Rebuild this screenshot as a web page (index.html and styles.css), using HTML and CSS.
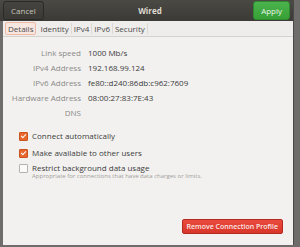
FILE: index.html
```
<!DOCTYPE html>
<html lang="en">
<head>
    <meta charset="UTF-8">
    <title>Wired</title>
    <link rel="stylesheet" href="styles.css">
</head>
<body>

<div class="desktop">
    <div class="dialog">
        <div class="headerbar">
            <button class="btn-cancel">Cancel</button>
            <div class="title">Wired</div>
            <button class="btn-apply">Apply</button>
        </div>

        <div class="tabs">
            <span class="tab active">Details</span>
            <span class="tab">Identity</span>
            <span class="tab">IPv4</span>
            <span class="tab">IPv6</span>
            <span class="tab">Security</span>
        </div>

        <div class="content">
            <div class="info">
                <span class="label">Link speed</span><span class="value">1000 Mb/s</span>
                <span class="label">IPv4 Address</span><span class="value">192.168.99.124</span>
                <span class="label">IPv6 Address</span><span class="value">fe80::d240:86db:c962:7609</span>
                <span class="label">Hardware Address</span><span class="value">08:00:27:83:7E:43</span>
                <span class="label">DNS</span><span class="value"></span>
            </div>

            <div class="checks">
                <div class="check">
                    <span class="box checked"></span>
                    <span>Connect automatically</span>
                </div>
                <div class="check">
                    <span class="box checked"></span>
                    <span>Make available to other users</span>
                </div>
                <div class="check">
                    <span class="box"></span>
                    <div>
                        <div>Restrict background data usage</div>
                        <div class="hint">Appropriate for connections that have data charges or limits.</div>
                    </div>
                </div>
            </div>

            <div class="footer">
                <button class="btn-remove">Remove Connection Profile</button>
            </div>
        </div>
    </div>
    <div class="side"></div>
</div>

</body>
</html>
```

FILE: styles.css
```
body {
    margin: 0;
    font-family: "Open Sans", "DejaVu Sans", sans-serif;
    font-size: 8px;
    background-color: #6e6d6b;
}
.desktop {
    display: flex;
    width: 300px;
    height: 247px;
    overflow: hidden;
}
.dialog {
    width: 290px;
    height: 245px;
    margin-left: 3px;
    display: flex;
    flex-direction: column;
    background-color: #f2f1f0;
    border-right: 1px solid #4a4945;
}
.side {
    flex: 1;
    background-color: #6e6d6b;
}
.headerbar {
    height: 21px;
    margin-left: -3px;
    display: flex;
    align-items: center;
    justify-content: space-between;
    padding: 0 3px 0 3px;
    background: linear-gradient(#4a4944, #3b3a36);
    color: #dfdbd2;
}
.headerbar button {
    font-family: inherit;
    font-size: 8px;
    height: 19px;
    border-radius: 3px;
    padding: 0 7px;
}
.btn-cancel {
    background: linear-gradient(#45443f, #3a3935);
    border: 1px solid #2b2a27;
    color: #c8c4bc;
}
.btn-apply {
    background: linear-gradient(#4cb34c, #36a036);
    border: 1px solid #2f8a2f;
    color: #e8f5e8;
    padding: 0 5px;
    margin-left: 3px;
}
.title {
    font-weight: bold;
    color: #dfdbd2;
    margin-left: 6px;
}
.tabs {
    display: flex;
    align-items: center;
    height: 15px;
    padding: 0 2px;
    border-bottom: 1px solid #d5d2cd;
    background-color: #efedeb;
    color: #4c4c4c;
}
.tab {
    padding: 0 2px;
    line-height: 11px;
    border-right: 1px solid #dcd9d4;
}
.tab.active {
    border: 1px solid #f0b9a5;
    border-radius: 2px;
    background-color: #f7e6df;
    margin-right: 2px;
}
.content {
    flex: 1;
    display: flex;
    flex-direction: column;
    padding: 10px 0 0 0;
}
.info {
    display: grid;
    grid-template-columns: 78px 1fr;
    column-gap: 7px;
    row-gap: 4px;
    line-height: 11px;
}
.label {
    text-align: right;
    color: #8a8a87;
}
.value {
    color: #3c3c3c;
    min-height: 11px;
}
.checks {
    margin-top: 12px;
    padding-left: 16px;
    display: flex;
    flex-direction: column;
    gap: 6px;
    color: #3c3c3c;
}
.check {
    display: flex;
    align-items: flex-start;
    gap: 4px;
    line-height: 11px;
}
.check:last-child {
    margin-top: -2px;
}
.box {
    width: 7px;
    height: 7px;
    margin-top: 2px;
    border: 1px solid #b5b2ad;
    border-radius: 1px;
    background-color: #fafafa;
    position: relative;
}
.box.checked {
    background-color: #e9662d;
    border-color: #c9521f;
}
.box.checked::after {
    content: "";
    position: absolute;
    left: 2px;
    top: 0px;
    width: 2px;
    height: 4px;
    border: solid #fff;
    border-width: 0 1px 1px 0;
    transform: rotate(45deg);
}
.hint {
    font-size: 6px;
    line-height: 7px;
    color: #a19e99;
}
.footer {
    margin-top: auto;
    display: flex;
    justify-content: flex-end;
    padding: 0 10px 11px 0;
}
.btn-remove {
    font-family: inherit;
    font-size: 7px;
    font-weight: 600;
    height: 15px;
    padding: 0 4px;
    border: 1px solid #b52a20;
    border-radius: 2px;
    background: linear-gradient(#ea4a3d, #d8362a);
    color: #fbe8e6;
}
```
